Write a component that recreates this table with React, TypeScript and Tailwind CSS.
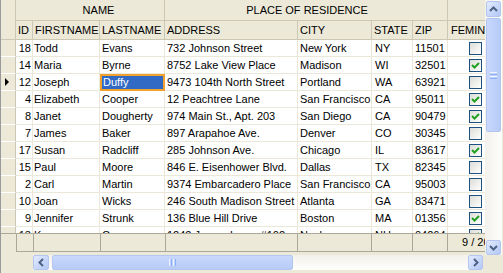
import React from "react";

interface Person {
  id: number;
  first: string;
  last: string;
  address: string;
  city: string;
  state: string;
  zip: string;
  fem: boolean;
}

const people: Person[] = [
  { id: 18, first: "Todd", last: "Evans", address: "732 Johnson Street", city: "New York", state: "NY", zip: "11501", fem: false },
  { id: 14, first: "Maria", last: "Byrne", address: "8752 Lake View Place", city: "Madison", state: "WI", zip: "32501", fem: true },
  { id: 12, first: "Joseph", last: "Duffy", address: "9473 104th North Street", city: "Portland", state: "WA", zip: "63921", fem: false },
  { id: 4, first: "Elizabeth", last: "Cooper", address: "12 Peachtree Lane", city: "San Francisco", state: "CA", zip: "95011", fem: true },
  { id: 8, first: "Janet", last: "Dougherty", address: "974 Main St., Apt. 203", city: "San Diego", state: "CA", zip: "90479", fem: true },
  { id: 7, first: "James", last: "Baker", address: "897 Arapahoe Ave.", city: "Denver", state: "CO", zip: "30345", fem: false },
  { id: 17, first: "Susan", last: "Radcliff", address: "285 Johnson Ave.", city: "Chicago", state: "IL", zip: "83617", fem: true },
  { id: 15, first: "Paul", last: "Moore", address: "846 E. Eisenhower Blvd.", city: "Dallas", state: "TX", zip: "82345", fem: false },
  { id: 2, first: "Carl", last: "Martin", address: "9374 Embarcadero Place", city: "San Francisco", state: "CA", zip: "95003", fem: false },
  { id: 10, first: "Joan", last: "Wicks", address: "246 South Madison Street", city: "Atlanta", state: "GA", zip: "83471", fem: false },
  { id: 9, first: "Jennifer", last: "Strunk", address: "136 Blue Hill Drive", city: "Boston", state: "MA", zip: "01356", fem: true },
  { id: 13, first: "Karen", last: "Cummens", address: "1242 Jersey Lane, #102", city: "Nashua", state: "NH", zip: "04264", fem: true },
];

function CheckBox({ checked }: { checked: boolean }) {
  return (
    <span className="flex h-[13px] w-[13px] items-center justify-center border border-[#1C5180] bg-gradient-to-br from-[#DCDCD7] to-white">
      {checked && (
        <svg width="11" height="11" viewBox="0 0 11 11">
          <polyline points="2,5 4.5,7.5 9,3" fill="none" stroke="#21A121" strokeWidth="2" />
        </svg>
      )}
    </span>
  );
}

function Chevron({ dir }: { dir: "up" | "down" | "left" | "right" }) {
  const pts = {
    up: "2,7 5.5,3.5 9,7",
    down: "2,4 5.5,7.5 9,4",
    left: "7,2 3.5,5.5 7,9",
    right: "4,2 7.5,5.5 4,9",
  }[dir];
  return (
    <svg width="11" height="11" viewBox="0 0 11 11">
      <polyline points={pts} fill="none" stroke="#4D6185" strokeWidth="2" />
    </svg>
  );
}

function ScrollButton({ dir, className }: { dir: "up" | "down" | "left" | "right"; className: string }) {
  return (
    <div className={`flex items-center justify-center rounded-[2px] border border-[#B4C6F0] bg-gradient-to-br from-[#E3EBFE] to-[#B3C8F5] ${className}`}>
      <Chevron dir={dir} />
    </div>
  );
}

export default function App() {
  const hdr = "border-r border-b border-r-[#CBC7B3] border-b-[#CBC7B3] bg-[#ECE9D8] pl-[2px] flex items-center";
  const cell = "border-r border-b border-[#EBE8D9] flex items-center overflow-hidden whitespace-nowrap";

  return (
    <div className="h-[273px] w-[503px] overflow-hidden border-l border-[#9A9A9A] bg-[#ECE9D8] font-['Liberation_Sans',Arial,sans-serif] text-[11px] text-black">
      <div className="flex h-[255px]">
        {/* grid area */}
        <div className="w-[484px] shrink-0 overflow-hidden">
          <div className="w-[497px]">
            {/* header */}
            <div className="flex h-[40px]">
              <div className="w-[15px] shrink-0 border-r border-b border-r-[#CBC7B3] border-b-[#CBC7B3] bg-[#ECE9D8]" />
              <div className="flex flex-col">
                <div className="flex h-[21px]">
                  <div className={`${hdr} w-[149px] justify-center pl-[17px]`}>NAME</div>
                  <div className={`${hdr} w-[283px] justify-center`}>PLACE OF RESIDENCE</div>
                  <div className={`${hdr} w-[50px]`} />
                </div>
                <div className="flex h-[19px]">
                  <div className={`${hdr} w-[17px]`}>ID</div>
                  <div className={`${hdr} w-[67px]`}>FIRSTNAME</div>
                  <div className={`${hdr} w-[65px]`}>LASTNAME</div>
                  <div className={`${hdr} w-[133px]`}>ADDRESS</div>
                  <div className={`${hdr} w-[74px]`}>CITY</div>
                  <div className={`${hdr} w-[41px]`}>STATE</div>
                  <div className={`${hdr} w-[35px]`}>ZIP</div>
                  <div className={`${hdr} w-[50px] pl-[3px]`}>FEMININE</div>
                </div>
              </div>
            </div>

            {/* body */}
            <div className="h-[193px] overflow-hidden bg-white">
              {people.map((p, i) => {
                const current = i === 2;
                return (
                  <div key={p.id} className="flex h-[17px]">
                    <div className="flex w-[15px] shrink-0 items-center border-r border-b border-r-[#CBC7B3] border-b-white bg-[#ECE9D8] pl-[4px]">
                      {current && (
                        <svg width="5" height="8" viewBox="0 0 5 8">
                          <polygon points="0,0 4,4 0,8" fill="#000" />
                        </svg>
                      )}
                    </div>
                    <div className={`${cell} w-[17px] justify-end pr-[1px]`}>{p.id}</div>
                    <div className={`${cell} w-[67px] pl-[1px]`}>{p.first}</div>
                    {current ? (
                      <div className="flex w-[65px] items-center border-2 border-[#F2A22C] bg-[#316AC5] pl-[1px] text-white">{p.last}</div>
                    ) : (
                      <div className={`${cell} w-[65px] pl-[2px]`}>{p.last}</div>
                    )}
                    <div className={`${cell} w-[133px] pl-[2px]`}>{p.address}</div>
                    <div className={`${cell} w-[74px] pl-[2px]`}>{p.city}</div>
                    <div className={`${cell} w-[41px] pl-[3px]`}>{p.state}</div>
                    <div className={`${cell} w-[35px] pl-[2px]`}>{p.zip}</div>
                    <div className={`${cell} w-[50px] pl-[21px]`}>
                      <CheckBox checked={p.fem} />
                    </div>
                  </div>
                );
              })}
            </div>

            {/* footer */}
            <div className="flex h-[19px] border-t border-[#ACA899]">
              <div className="w-[16px] shrink-0 border-r border-[#ACA899]" />
              <div className="w-[17px] border-r border-b border-[#ACA899]" />
              <div className="w-[67px] border-r border-b border-[#ACA899]" />
              <div className="w-[65px] border-r border-b border-[#ACA899]" />
              <div className="w-[133px] border-r border-b border-[#ACA899]" />
              <div className="w-[74px] border-r border-b border-[#ACA899]" />
              <div className="w-[41px] border-r border-b border-[#ACA899]" />
              <div className="w-[35px] border-r border-b border-[#ACA899]" />
              <div className="flex w-[50px] items-center border-b border-[#ACA899] pl-[14px] whitespace-nowrap">9 / 20</div>
            </div>
          </div>
        </div>

        {/* vertical scrollbar */}
        <div className="flex w-[17px] shrink-0 flex-col bg-gradient-to-r from-[#F3F1EC] to-[#FEFEFB] px-[1px] pt-[1px]">
          <ScrollButton dir="up" className="h-[16px] w-[15px] shrink-0" />
          <div className="mt-[1px] flex h-[114px] shrink-0 flex-col items-center justify-center gap-[1px] rounded-[2px] border border-[#B4C6F0] bg-gradient-to-r from-[#C9D8FC] to-[#B6CBF7]">
            <div className="h-px w-[7px] bg-[#EEF3FE]" />
            <div className="h-px w-[7px] bg-[#8CB0F8]" />
            <div className="h-px w-[7px] bg-[#EEF3FE]" />
            <div className="h-px w-[7px] bg-[#8CB0F8]" />
          </div>
          <div className="flex-1" />
          <ScrollButton dir="down" className="h-[15px] w-[15px] shrink-0" />
        </div>
      </div>

      {/* horizontal scrollbar */}
      <div className="flex h-[15px] w-[450px] ml-[32px] bg-gradient-to-b from-[#F3F1EC] to-[#FEFEFB] py-0">
        <ScrollButton dir="left" className="h-[15px] w-[16px] shrink-0" />
        <div className="ml-[3px] flex h-[15px] w-[241px] shrink-0 items-center justify-center gap-[1px] rounded-[2px] border border-[#B4C6F0] bg-gradient-to-b from-[#C9D8FC] to-[#B6CBF7]">
          <div className="h-[7px] w-px bg-[#EEF3FE]" />
          <div className="h-[7px] w-px bg-[#8CB0F8]" />
          <div className="h-[7px] w-px bg-[#EEF3FE]" />
          <div className="h-[7px] w-px bg-[#8CB0F8]" />
        </div>
        <div className="flex-1" />
        <ScrollButton dir="right" className="h-[15px] w-[15px] shrink-0" />
      </div>
    </div>
  );
}
